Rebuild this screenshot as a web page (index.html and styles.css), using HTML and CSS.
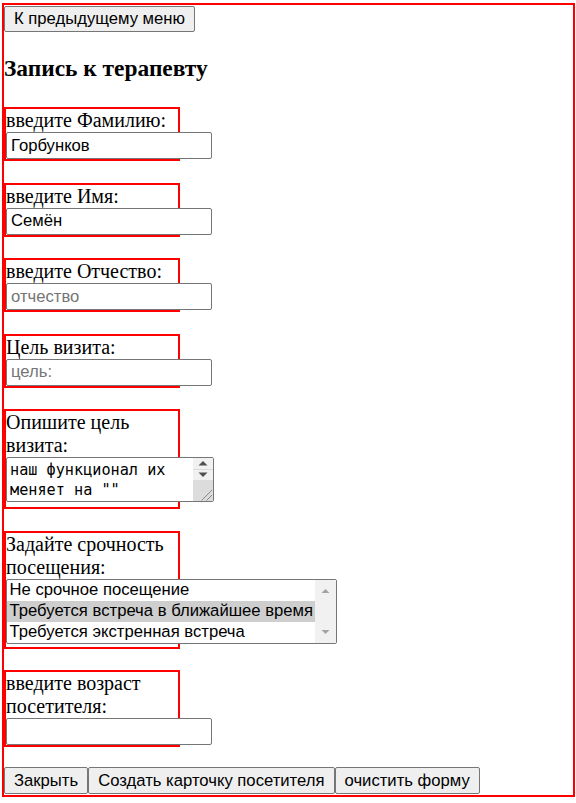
FILE: index.html
```html
<!DOCTYPE html>
<html lang="ru">
<head>
<meta charset="utf-8">
<title>Запись к терапевту</title>
<link rel="stylesheet" href="styles.css">
</head>
<body>
<div class="page">
  <div class="top-row"><button class="btn" type="button">К предыдущему меню</button></div>
  <h3 class="title">Запись к терапевту</h3>
  <form class="form">
    <div class="field">
      <label class="field-label" for="f1">введите Фамилию:</label>
      <input class="text-input" id="f1" type="text" value="Горбунков">
    </div>
    <div class="field">
      <label class="field-label" for="f2">введите Имя:</label>
      <input class="text-input" id="f2" type="text" value="Семён">
    </div>
    <div class="field">
      <label class="field-label" for="f3">введите Отчество:</label>
      <input class="text-input" id="f3" type="text" placeholder="отчество">
    </div>
    <div class="field">
      <label class="field-label" for="f4">Цель визита:</label>
      <input class="text-input" id="f4" type="text" placeholder="цель:">
    </div>
    <div class="field">
      <label class="field-label" for="f5">Опишите цель визита:</label>
      <div class="ta">
        <textarea class="ta-text" id="f5">наш функционал их меняет на ""</textarea>
        <div class="vscroll">
          <span class="sb-btn"><svg width="20" height="11" viewBox="0 0 20 11"><polygon points="5.5,7.5 10,3 14.5,7.5" fill="#505050"/></svg></span>
          <span class="sb-btn sb-btn-down"><svg width="20" height="10" viewBox="0 0 20 10"><polygon points="5.5,2.5 10,7 14.5,2.5" fill="#505050"/></svg></span>
          <span class="sb-corner"><svg width="20" height="21" viewBox="0 0 20 21"><line x1="8.5" y1="20.5" x2="19" y2="10" stroke="#8a8a8a" stroke-width="1"/><line x1="13.5" y1="20.5" x2="19" y2="15" stroke="#8a8a8a" stroke-width="1"/></svg></span>
        </div>
      </div>
    </div>
    <div class="field field-lb">
      <label class="field-label">Задайте срочность посещения:</label>
      <div class="listbox">
        <div class="lb-options">
          <div class="lb-option">Не срочное посещение</div>
          <div class="lb-option is-selected">Требуется встреча в ближайшее время</div>
          <div class="lb-option">Требуется экстренная встреча</div>
        </div>
        <div class="lb-scroll">
          <span class="lb-arrow"><svg width="21" height="21" viewBox="0 0 21 21"><polygon points="6.5,13 10.5,9 14.5,13" fill="#a3a3a3"/></svg></span>
          <span class="lb-arrow"><svg width="21" height="21" viewBox="0 0 21 21"><polygon points="6.5,8 10.5,12 14.5,8" fill="#a3a3a3"/></svg></span>
        </div>
      </div>
    </div>
    <div class="field field-last">
      <label class="field-label" for="f7">введите возраст посетителя:</label>
      <input class="text-input" id="f7" type="text">
    </div>
    <div class="actions"><button class="btn btn-tall" type="button">Закрыть</button><button class="btn btn-tall" type="button">Создать карточку посетителя</button><button class="btn btn-tall" type="reset">очистить форму</button></div>
  </form>
</div>
</body>
</html>
```
FILE: styles.css
```css
html, body {
  margin: 0;
  padding: 0;
  background: #fff;
}

body {
  font-family: "Liberation Serif", "Times New Roman", serif;
  font-size: 20px;
  color: #000;
}

.page {
  width: 569px;
  margin: 3px 0 0 2px;
  border: 2px solid #ff0000;
  padding: 1px 0 1px;
}

.top-row {
  display: flex;
}

.btn {
  box-sizing: border-box;
  font-family: "Liberation Sans", Arial, sans-serif;
  font-size: 16.67px;
  line-height: normal;
  height: 26px;
  margin: 0;
  padding: 0 9px;
  border: 1px solid #767676;
  border-radius: 2px;
  background: #efefef;
  color: #000;
  white-space: nowrap;
}

.btn-tall {
  height: 27px;
}

.title {
  margin: 23px 0 25px;
  font-size: 23.4px;
  line-height: 27px;
  font-weight: bold;
}

.form {
  margin: 0;
}

.field {
  width: 172px;
  border: 2px solid #ff0000;
  margin-bottom: 21.5px;
}

.field-last {
  margin-bottom: 20px;
}

.field-label {
  display: block;
  font-size: 20px;
  line-height: 23px;
}

.text-input {
  display: block;
  box-sizing: border-box;
  width: 206px;
  height: 27px;
  margin: 0;
  padding: 0 4px;
  border: 1px solid #767676;
  border-radius: 2px;
  font-family: "Liberation Sans", Arial, sans-serif;
  font-size: 16.67px;
  color: #000;
  background: #fff;
  outline: none;
}

.text-input::placeholder {
  color: #757575;
  opacity: 1;
}

.ta {
  box-sizing: border-box;
  width: 208px;
  height: 45px;
  display: flex;
  border: 1px solid #767676;
  border-radius: 2px;
  margin-bottom: 5px;
  background: #fff;
}

.ta-text {
  flex: 1;
  min-width: 0;
  margin: 0;
  padding: 3px 3px 0;
  border: 0;
  resize: none;
  overflow: hidden;
  font-family: "DejaVu Sans Mono", "Liberation Mono", monospace;
  font-size: 15.2px;
  line-height: 19.5px;
  color: #000;
  background: transparent;
  outline: none;
}

.vscroll {
  width: 20px;
  display: flex;
  flex-direction: column;
  background: #f1f1f1;
}

.sb-btn {
  height: 11px;
  display: flex;
  align-items: center;
  justify-content: center;
}

.sb-btn-down {
  height: 10px;
  border-top: 1px solid #dadada;
}

.sb-corner {
  flex: 1;
  display: flex;
  align-items: flex-end;
  justify-content: flex-end;
  background: #dcdcdc;
  overflow: hidden;
}

.listbox {
  box-sizing: border-box;
  width: 331px;
  height: 65px;
  display: flex;
  border: 1px solid #767676;
  border-radius: 2px;
  margin-bottom: 3px;
  background: #fff;
  font-family: "Liberation Sans", Arial, sans-serif;
  font-size: 16.67px;
}

.lb-options {
  flex: 1;
  min-width: 0;
}

.lb-option {
  box-sizing: border-box;
  height: 21px;
  line-height: 20px;
  padding: 0 2.5px 1px;
  white-space: nowrap;
  overflow: hidden;
}

.is-selected {
  background: #cecece;
}

.lb-scroll {
  width: 21px;
  display: flex;
  flex-direction: column;
  justify-content: space-between;
  background: #f1f1f1;
}

.lb-arrow {
  height: 21px;
  display: flex;
}

.actions {
  display: flex;
}
```
